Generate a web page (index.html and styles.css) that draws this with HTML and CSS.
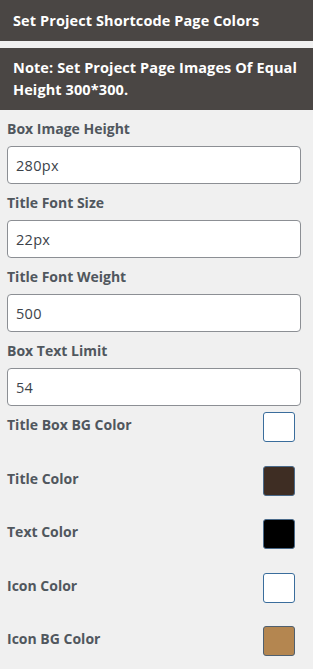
FILE: index.html
```html
<!DOCTYPE html>
<html>
<head>
<meta charset="utf-8">
<link rel="stylesheet" href="styles.css">
</head>
<body>
<div class="header">Set Project Shortcode Page Colors</div>
<div class="note">Note: Set Project Page Images Of Equal Height 300*300.</div>
<div class="form">
  <div class="field">
    <label class="label">Box Image Height</label>
    <input class="input" type="text" value="280px">
  </div>
  <div class="field">
    <label class="label">Title Font Size</label>
    <input class="input" type="text" value="22px">
  </div>
  <div class="field">
    <label class="label">Title Font Weight</label>
    <input class="input" type="text" value="500">
  </div>
  <div class="field">
    <label class="label">Box Text Limit</label>
    <input class="input" type="text" value="54">
  </div>
  <div class="colors">
    <div class="color-row"><span class="label">Title Box BG Color</span><span class="swatch swatch-white"></span></div>
    <div class="color-row"><span class="label">Title Color</span><span class="swatch swatch-brown"></span></div>
    <div class="color-row"><span class="label">Text Color</span><span class="swatch swatch-black"></span></div>
    <div class="color-row"><span class="label">Icon Color</span><span class="swatch swatch-white"></span></div>
    <div class="color-row"><span class="label">Icon BG Color</span><span class="swatch swatch-tan"></span></div>
  </div>
</div>
</body>
</html>
```
FILE: styles.css
```css
* { box-sizing: border-box; }
body {
  margin: 0;
  background: #f0f0f0;
  font-family: "Open Sans", "Noto Sans", sans-serif;
}
.header {
  height: 41px;
  background: #4a4644;
  color: #fff;
  font-weight: 700;
  font-size: 14.5px;
  line-height: 41px;
  padding-left: 13px;
  letter-spacing: 0.1px;
}
.note {
  margin-top: 7px;
  background: #4a4644;
  color: #fff;
  font-weight: 700;
  font-size: 14.5px;
  line-height: 22px;
  padding: 9px 13px;
  height: 62px;
  letter-spacing: 0.1px;
}
.form {
  padding: 0 12px 0 7px;
}
.field {
  display: flex;
  flex-direction: column;
}
.label {
  display: block;
  color: #50575e;
  font-weight: 700;
  font-size: 14px;
  line-height: 20px;
  margin: 9px 0 7px;
  letter-spacing: 0;
}
.input {
  height: 38px;
  width: 100%;
  border: 1px solid #8c8f94;
  border-radius: 4px;
  background: #fff;
  padding: 0 8px;
  font-family: inherit;
  font-size: 14.5px;
  letter-spacing: 0.3px;
  color: #3c434a;
  outline: none;
}
.colors {
  padding-top: 6px;
}
.color-row {
  display: flex;
  align-items: center;
  justify-content: space-between;
  height: 30px;
  margin-bottom: 23.5px;
  padding-right: 6px;
}
.color-row .label {
  margin: 0 0 4px;
}
.swatch {
  width: 32px;
  height: 30px;
  border-radius: 3px;
  border: 1px solid #4a6a8a;
}
.swatch-white { background: #fff; border-color: #3a6d9c; }
.swatch-brown { background: #3e2d23; }
.swatch-black { background: #000; }
.swatch-tan { background: #b48650; border-color: #4f6070; }
```
